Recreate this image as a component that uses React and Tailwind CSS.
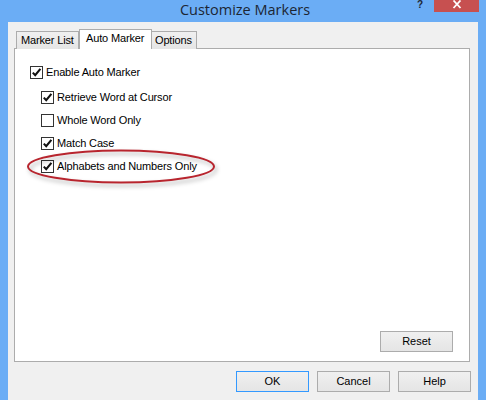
import React, { useState } from "react";

const font = { fontFamily: '"Liberation Sans", Arial, sans-serif' };

const CheckBox = ({ checked, onClick }) => (
  <span
    onClick={onClick}
    className="w-[13px] h-[13px] border border-[#333333] bg-white flex items-center justify-center shrink-0"
  >
    {checked && (
      <svg width="11" height="11" viewBox="0 0 11 11">
        <path d="M1.8 5.6 L4.2 8.2 L9.4 1.8" fill="none" stroke="#111" strokeWidth="2.1" />
      </svg>
    )}
  </span>
);

const Option = ({ label, checked, onToggle, className }) => (
  <div className={"flex items-center gap-[3px] " + className}>
    <CheckBox checked={checked} onClick={onToggle} />
    <span className="text-[11px] leading-[13px] text-black tracking-[-0.15px]">{label}</span>
  </div>
);

const Button = ({ children, isDefault, className }) => (
  <button
    className={
      "w-[73px] h-[21px] text-[11px] text-black bg-gradient-to-b from-[#f0f0f0] to-[#e5e5e5] border " +
      (isDefault ? "border-[#3399ff] " : "border-[#acacac] ") +
      (className || "")
    }
  >
    {children}
  </button>
);

export default function App() {
  const [opts, setOpts] = useState({
    enable: true,
    retrieve: true,
    whole: false,
    match: true,
    alpha: true,
  });
  const toggle = (k) => setOpts({ ...opts, [k]: !opts[k] });

  return (
    <div className="w-[486px] h-[400px] bg-[#6badf5] flex flex-col overflow-hidden" style={font}>
      {/* title bar */}
      <div className="h-[22px] relative shrink-0">
        <div
          className="w-full text-center text-[14.5px] leading-[20px] text-[#1c2633] pl-[4px]"
          style={{ fontFamily: '"Open Sans", "Noto Sans", sans-serif' }}
        >
          Customize Markers
        </div>
        <div className="absolute right-[7px] top-0 flex items-start">
          <span className="text-[10px] font-bold leading-[10px] text-[#1c2633] mr-[11px]">?</span>
          <div className="w-[45px] h-[12px] bg-[#c75050] flex items-start justify-center">
            <svg width="10" height="9" viewBox="0 0 10 9">
              <path d="M1.5 0.5 L8.5 8 M8.5 0.5 L1.5 8" stroke="#fff" strokeWidth="1.8" />
            </svg>
          </div>
        </div>
      </div>

      {/* client area */}
      <div className="flex-1 mx-[8px] bg-[#f0f0f0] flex flex-col px-[6px] pt-[7px]">
        {/* tabs */}
        <div className="flex items-end h-[20px] pl-[2px] text-[11px] text-black relative z-10 -mb-[1px]">
          <div className="w-[63px] h-[18px] border border-b-0 border-[#acacac] bg-gradient-to-b from-[#f0f0f0] to-[#e5e5e5] pl-[4px] leading-[17px] tracking-[-0.15px]">
            Marker List
          </div>
          <div className="w-[73px] h-[20px] border border-b-0 border-[#acacac] bg-white pl-[6px] leading-[16px] tracking-[-0.15px]">
            Auto Marker
          </div>
          <div className="w-[45px] h-[18px] border border-l-0 border-b-0 border-[#acacac] bg-gradient-to-b from-[#f0f0f0] to-[#e5e5e5] pl-[3px] leading-[17px] tracking-[-0.15px]">
            Options
          </div>
        </div>

        {/* panel */}
        <div className="w-[456px] h-[314px] border border-[#acacac] bg-white flex flex-col relative">
          <div className="flex flex-col pl-[15px] pt-[17px]">
            <Option label="Enable Auto Marker" checked={opts.enable} onToggle={() => toggle("enable")} />
            <div className="flex flex-col pl-[11px]">
              <Option className="mt-[12px]" label="Retrieve Word at Cursor" checked={opts.retrieve} onToggle={() => toggle("retrieve")} />
              <Option className="mt-[10px]" label="Whole Word Only" checked={opts.whole} onToggle={() => toggle("whole")} />
              <Option className="mt-[10px]" label="Match Case" checked={opts.match} onToggle={() => toggle("match")} />
              <Option className="mt-[10px]" label="Alphabets and Numbers Only" checked={opts.alpha} onToggle={() => toggle("alpha")} />
            </div>
          </div>

          {/* highlight ellipse */}
          <svg
            className="absolute left-[11px] top-[100px] drop-shadow-[2px_3px_2px_rgba(0,0,0,0.3)]"
            width="191"
            height="37"
            viewBox="0 0 191 37"
          >
            <ellipse cx="95" cy="17.5" rx="93" ry="16" fill="none" stroke="#b8252e" strokeWidth="2" />
          </svg>

          <div className="flex-1" />
          <div className="flex justify-end pr-[16px] pb-[9px]">
            <Button>Reset</Button>
          </div>
        </div>

        {/* bottom buttons */}
        <div className="flex justify-end gap-[8px] pt-[9px] -mr-[6px] pr-[7px]">
          <Button isDefault>OK</Button>
          <Button>Cancel</Button>
          <Button>Help</Button>
        </div>
      </div>
    </div>
  );
}
